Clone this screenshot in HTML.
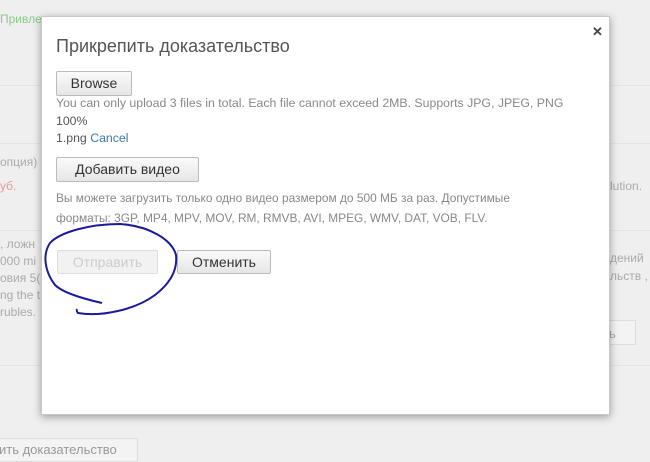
<!DOCTYPE html>
<html><head><meta charset="utf-8"><style>
*{margin:0;padding:0;box-sizing:border-box}
body{width:650px;height:455px;overflow:hidden;background:#efefef;font-family:"Liberation Sans","Noto Sans CJK SC",sans-serif;position:relative;color:#999}
.bg{position:absolute;font-size:12px;color:#aaa;white-space:nowrap}
.line{position:absolute;left:0;width:650px;height:1px;background:#e4e4e4}
.modal{position:absolute;left:41px;top:16px;width:569px;height:399px;background:#fff;border:1px solid #c8c8c8;box-shadow:0 2px 8px rgba(0,0,0,.35)}
.modal .t{position:absolute;left:14px;top:19px;font-size:18px;color:#555}
.x{position:absolute;left:550px;top:7px;font-size:13px;font-weight:bold;color:#444}
.btn{position:absolute;border:1px solid #bbb;border-radius:2px;background:linear-gradient(#fafafa,#e6e6e6);font-size:14px;color:#333;text-align:center}
.s{position:absolute;left:14px;font-size:12.3px;color:#888;white-space:nowrap}
</style></head><body>
<div class="bg" style="left:0;top:12px;color:#8c8">Привле</div>
<div class="line" style="top:85px"></div>
<div class="line" style="top:143px"></div>
<div class="line" style="top:230px"></div>
<div class="line" style="top:365px"></div>
<div class="bg" style="left:0;top:155px">опция)</div>
<div class="bg" style="left:0;top:179px;color:#e99">уб.</div>
<div class="bg" style="left:0;top:237px">, ложн</div>
<div class="bg" style="left:0;top:254px">000 mi</div>
<div class="bg" style="left:0;top:271px">овия 5(</div>
<div class="bg" style="left:0;top:288px">ng the t</div>
<div class="bg" style="left:0;top:305px">rubles.</div>
<div class="bg" style="left:610px;top:179px">lution.</div>
<div class="bg" style="left:610px;top:251px">дений</div>
<div class="bg" style="left:610px;top:269px">льств ,</div>
<div style="position:absolute;left:600px;top:320px;width:36px;height:25px;border:1px solid #ddd;background:#f3f3f3;font-size:13px;color:#aaa;padding:5px 0 0 8px">ь</div>
<div style="position:absolute;left:-2px;top:438px;width:140px;height:24px;border:1px solid #ddd;background:#f3f3f3;font-size:13px;color:#999;padding:3px 0 0 0">ить доказательство</div>
<div class="modal">
<div class="t">Прикрепить доказательство</div>
<div class="x">✕</div>
<div class="btn" style="left:14px;top:54px;width:76px;height:25px;line-height:23px">Browse</div>
<div class="s" style="top:79px">You can only upload 3 files in total. Each file cannot exceed 2MB. Supports JPG, JPEG, PNG</div>
<div class="s" style="top:97px;color:#555">100%</div>
<div class="s" style="top:114px;color:#555">1.png <span style="color:#3a7ab0">Cancel</span></div>
<div class="btn" style="left:14px;top:140px;width:143px;height:25px;line-height:23px">Добавить видео</div>
<div class="s" style="top:174px;font-size:11.9px">Вы можете загрузить только одно видео размером до 500 МБ за раз. Допустимые</div>
<div class="s" style="top:194px;font-size:11.9px">форматы: 3GP, MP4, MPV, MOV, RM, RMVB, AVI, MPEG, WMV, DAT, VOB, FLV.</div>
<div class="btn" style="left:15px;top:233px;width:101px;height:24px;line-height:22px;color:#ccc;border-color:#ddd;background:#f2f2f2">Отправить</div>
<div class="btn" style="left:135px;top:233px;width:94px;height:24px;line-height:22px">Отменить</div>
</div>
<svg style="position:absolute;left:0;top:0" width="650" height="455"><path d="M102,303 C80,298 62,292 55,285 C45,272 42,255 50,243 C60,232 90,224 120,224 C150,226 172,240 176,255 C178,272 168,285 155,295 C135,310 100,317 78,313 C76,311 77,309 77,309" fill="none" stroke="#1a1a9a" stroke-width="2"/></svg>
</body></html>
